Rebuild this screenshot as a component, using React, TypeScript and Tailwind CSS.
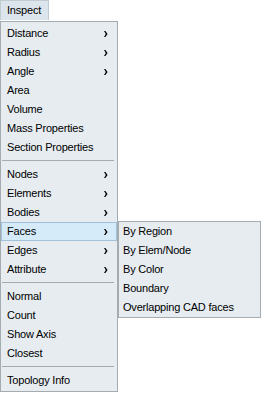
const groups: { label: string; sub?: boolean }[][] = [
  [
    { label: 'Distance', sub: true },
    { label: 'Radius', sub: true },
    { label: 'Angle', sub: true },
    { label: 'Area' },
    { label: 'Volume' },
    { label: 'Mass Properties' },
    { label: 'Section Properties' },
  ],
  [
    { label: 'Nodes', sub: true },
    { label: 'Elements', sub: true },
    { label: 'Bodies', sub: true },
    { label: 'Faces', sub: true },
    { label: 'Edges', sub: true },
    { label: 'Attribute', sub: true },
  ],
  [{ label: 'Normal' }, { label: 'Count' }, { label: 'Show Axis' }, { label: 'Closest' }],
  [{ label: 'Topology Info' }],
];

const faceItems = ['By Region', 'By Elem/Node', 'By Color', 'Boundary', 'Overlapping CAD faces'];

function Arrow() {
  return (
    <svg width="4" height="6" viewBox="0 0 4 6" className="block">
      <polygon points="0,0 1.4,0 3.6,3 1.4,6 0,6 1.8,3" fill="#000" />
    </svg>
  );
}

export default function App() {
  return (
    <div
      className="w-[261px] h-[393px] bg-white text-black text-[11px] tracking-[-0.2px] overflow-hidden"
      style={{ fontFamily: '"Liberation Sans", Arial, sans-serif' }}
    >
      {/* Menu bar tab */}
      <div className="flex h-[20px]">
        <div className="w-[49px] h-[20px] bg-[#dde5ec] border border-b-0 border-[#c3cbd2] flex items-center pl-[6px]">
          Inspect
        </div>
      </div>

      <div className="flex items-start mt-[1px]">
        {/* Main dropdown */}
        <div className="w-[118px] bg-[#e6ecf0] border border-[#a4abb1] pt-[2px] pb-[1px]">
          {groups.map((group, gi) => (
            <div key={gi}>
              {gi > 0 && (
                <div className="h-[8px] pt-[3px] pl-[1px] pr-[3px]">
                  <div className="h-px bg-[#a7abae]" />
                </div>
              )}
              {group.map((it) => {
                const active = it.label === 'Faces';
                return (
                  <div
                    key={it.label}
                    className={
                      'h-[19px] flex items-center justify-between pl-[5px] pr-[8px] ' +
                      (active ? 'bg-[#d6ebf9] border border-[#a3c1d8]' : 'border border-transparent')
                    }
                  >
                    <span>{it.label}</span>
                    {it.sub && <Arrow />}
                  </div>
                );
              })}
            </div>
          ))}
        </div>

        {/* Faces submenu */}
        <div className="w-[143px] mt-[200px] bg-[#e6ecf0] border border-[#a4abb1]">
          {faceItems.map((t) => (
            <div key={t} className="h-[19px] flex items-center pl-[4px]">
              {t}
            </div>
          ))}
        </div>
      </div>
    </div>
  );
}
